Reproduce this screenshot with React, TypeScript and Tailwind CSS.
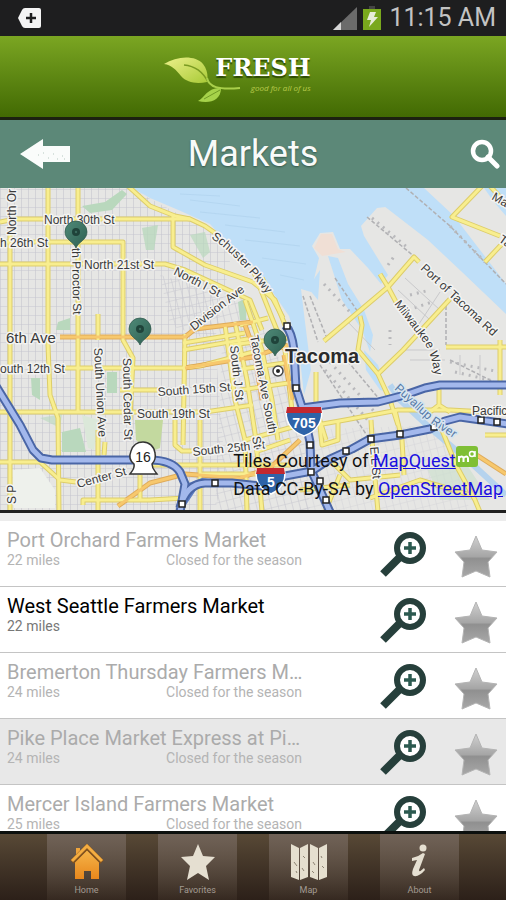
import type { ReactNode } from 'react';

interface Market {
  id: number;
  name: string;
  distance: string;
  closed: boolean;
  pressed?: boolean;
}

const markets: Market[] = [
  { id: 1, name: 'Port Orchard Farmers Market', distance: '22 miles', closed: true },
  { id: 2, name: 'West Seattle Farmers Market', distance: '22 miles', closed: false },
  { id: 3, name: 'Bremerton Thursday Farmers M…', distance: '24 miles', closed: true },
  { id: 4, name: 'Pike Place Market Express at Pi…', distance: '24 miles', closed: true, pressed: true },
  { id: 5, name: 'Mercer Island Farmers Market', distance: '25 miles', closed: true },
];

const yellowRoads = [
  'M0 222 L15 219 H190 L205 226 L215 233',
  'M128 186 L150 206 L175 216 L190 219',
  'M10 232 V512',
  'M48 186 V345 L50 395 L58 418 L59 512',
  'M78 186 V412',
  'M98 314 V340',
  'M98 430 V512',
  'M0 242 H123 V340 L133 358 L130 420',
  'M0 264 H165 L185 270 L250 300 L262 330',
  'M173 216 V247 L205 265 L253 282',
  'M185 334 L183 445',
  'M65 368 H183 L200 366 L253 352',
  'M120 390 H160',
  'M0 412 H205 L253 405',
  'M0 462 H40 L60 480 L76 482',
  'M83 505 V500 H150 L185 498',
  'M105 442 L104 455',
  'M140 475 V500',
  'M175 420 V445 L182 451 H192',
  'M200 420 V512',
  'M150 465 H290 M200 474 H300',
  'M183 350 L253 338 M183 343 L245 333',
  'M225 325 L235 400 L245 440 L247 512',
  'M235 322 L247 380 L256 440 L262 512',
  'M245 300 L262 350 L272 400 L278 440',
  'M253 270 L272 318 L285 350 L292 410',
  'M262 278 L283 318',
  'M253 282 L275 300 L287 330',
  'M240 325 L268 318 M230 345 L288 338 M235 370 L292 362 M240 390 L295 382 M245 440 L300 425 M255 452 L290 440',
  'M316 372 V408 L326 440',
  'M300 428 L345 420 L398 410 H450 L506 413',
  'M320 426 L322 445 L338 440 V422',
  'M371 420 L373 455 L378 512',
  'M395 410 L402 440 L404 475',
  'M324 341 L388 287 L414 257 L419 262',
  'M380 274 L388 287 L396 302',
  'M360 316 L362 325 L358 350 L378 374 L390 400 L398 425',
  'M450 299 L403 350 L378 374',
  'M482 186 L452 217 L500 236',
  'M490 186 L500 197',
  'M485 262 L500 246 L510 238',
  'M446 347 H506 M500 340 V395',
  'M439 385 V405 L430 412 M439 405 L450 412',
  'M440 425 L456 465 L475 500 L480 512',
  'M330 460 L350 480 L400 475 M340 475 L325 512 M300 490 L350 485 M370 498 L420 480 L470 495',
  'M485 435 H506',
];

const orangeRoads = [
  'M60 337 H185 L195 329 L253 322',
  'M118 506 L150 483 L185 474 L240 478 L270 468 L300 440',
  'M185 368 L215 363 L253 357 L288 345',
  'M245 325 L254 350 L262 400',
  'M472 452 L506 474',
  'M284 355 L292 400',
];

const highways = [
  'M-4 386 L20 425 L33 450 L41 458 L52 460 H150 Q172 460 180 472 L185 484 L180 512',
  'M180 508 Q186 484 205 483 H232 L262 486 L285 476 L312 471 L330 459 L352 449 L370 439 L400 435 L430 429 L445 421 L460 417 L508 424',
  'M285 325 Q292 332 294 350 L296 388 L303 410 L310 442 L311 470 L330 512',
  'M302 408 L340 403 L378 402 L405 395 L425 388 L440 385 H510',
];

const junctions: [number, number][] = [
  [287, 326], [296, 388], [310, 445], [311, 472], [320, 481], [326, 500], [346, 451],
  [371, 439], [400, 434], [434, 427], [481, 420], [497, 422], [215, 483], [182, 504],
];

// text, x, y, angle
const streetLabels: [string, number, number, number][] = [
  ['North 30th St', 44, 224, 0],
  ['h 26th St', 0, 247, 0],
  ['North 21st St', 84, 269, 0],
  ['outh 12th St', 0, 373, 0],
  ['South 15th St', 158, 396, -4],
  ['South 19th St', 137, 418, 0],
  ['South 25th St', 193, 456, -6],
  ['Center St', 78, 488, -15],
  ['South Union Ave', 94, 348, 87],
  ['South Cedar St', 123, 358, 89],
  ['th Proctor St', 72, 248, 89],
  ['North Or', 16, 235, -90],
  ['North I St', 173, 274, 27],
  ['Division Ave', 194, 331, -38],
  ['Tacoma Ave South', 250, 336, 79],
  ['South J St', 230, 346, 84],
  ['Port of Tacoma Rd', 420, 269, 43],
  ['Ma', 491, 199, 30],
  ['Ta', 498, 241, 35],
  ['Pacific', 472, 415, 0],
  ['E L St', 370, 447, 85],
  ['S P', 16, 504, -90],
  ['St', 252, 437, 80],
];

const pins: [number, number][] = [
  [76, 233],
  [140, 330],
  [275, 341],
];

function MarketMap() {
  return (
    <svg
      className="block h-[322px] w-full"
      viewBox="0 188 506 322"
      preserveAspectRatio="xMidYMid slice"
      role="img"
      aria-label="Map of Tacoma"
    >
      <defs>
        <pattern id="blocks" width="7" height="9" patternUnits="userSpaceOnUse">
          <path d="M0 0H7M0 0V9" stroke="#c6c6cf" strokeWidth="1.2" fill="none" />
        </pattern>
        <pattern id="hillBlocks" width="7" height="9" patternUnits="userSpaceOnUse" patternTransform="rotate(-14)">
          <path d="M0 0H7M0 0V9" stroke="#c8c8d0" strokeWidth="1.2" fill="none" />
        </pattern>
        <linearGradient id="pin" x1="0" y1="0" x2="1" y2="1">
          <stop offset="0" stopColor="#4f8a78" />
          <stop offset="1" stopColor="#2d5f51" />
        </linearGradient>
        <path id="schuster" d="M211 238 Q240 258 268 296" />
        <path id="milwaukee" d="M394 304 L425 344 Q433 358 436 384" />
        <path id="puyallup" d="M394 389 L432 424 L474 452" />
      </defs>

      <rect x="0" y="188" width="506" height="322" fill="#e6e6e4" />
      <path d="M0 188H130L175 212L213 232L232 250L215 340L225 470L215 510H0Z" fill="url(#blocks)" />
      <path d="M160 275L250 300L300 400L310 510H215L222 345L170 325Z" fill="url(#hillBlocks)" />
      <path d="M300 430L440 425L470 510H300Z" fill="url(#hillBlocks)" opacity="0.55" />

      {/* Parks */}
      <g fill="#b9d8bd">
        <path d="M82 206L105 202L122 190L127 194L112 210L90 213Z" />
        <path d="M142 228L158 225L154 250H146Z" opacity="0.8" />
        <path d="M190 235L205 232L210 252L203 258Z" opacity="0.7" />
        <path d="M58 322L70 318V330H56Z" />
        <path d="M31 378H40V400L32 395Z" />
        <path d="M107 372H117V393H107Z" />
        <path d="M62 432L80 428L86 452H62Z" />
        <path d="M40 418L62 414L60 428Z" opacity="0.6" />
        <path d="M238 302L247 298L246 320H240Z" />
      </g>
      <path d="M135 420H163L160 448L150 452L136 440Z" fill="#c3d99f" />
      <path d="M12 470L40 468L55 490V508H14Z" fill="#eef1ec" />
      <path d="M82 415L98 420L94 450L88 448Z" fill="#dbe8d9" />

      {/* Commencement Bay and the waterways */}
      <g fill="#bfdff8">
        <path d="M132 188H395L386 207L377 208L361 226L364 236L388 275L381 284L368 268L350 249H340L333 232L320 233L312 246L319 258L311 292L301 289L306 330L311 370L304 395L299 350L289 316L256 268L230 246L210 224L176 209L150 198Z" />
        <path d="M390 188L424 188L454 216L506 284V314L462 272L428 240L384 206Z" />
        <path d="M328 256L338 258L348 284L364 310L373 335L370 352L362 330L342 300Z" />
        <path d="M320 270L318 300L308 288Z" />
        <path d="M484 188H506V216L494 202Z" />
        <path d="M364 350L378 365L387 392L380 390L366 370Z" />
      </g>
      <path d="M314 248L321 234H332L338 249L346 252L322 256Z" fill="#f0dfd5" />
      <g stroke="#a9cdea" strokeWidth="1" fill="none" opacity="0.5">
        <path d="M190 200L240 206M200 212L260 218M225 225L285 232M245 240L300 246M262 258L306 264M180 194L220 196M280 275L304 280" />
      </g>

      {/* Rail lines and docks */}
      <g stroke="#b0b0b3" strokeWidth="1.5" strokeDasharray="4 2" fill="none">
        <path d="M406 188L450 226L506 284" />
        <path d="M367 217L416 258" />
        <path d="M303 296L318 342M310 296L326 336M335 278L358 312" />
        <path d="M446 300V345" />
        <path d="M320 365L370 440M340 352L380 400M450 360L500 385" />
      </g>
      <g stroke="#b9b9bc" strokeWidth="3" strokeDasharray="2 5" fill="none">
        <path d="M372 218L408 248M450 226L485 262M324 284L350 312M388 265L395 255M410 295L430 290M408 310L432 302" />
        <path d="M325 370L372 425M330 362L380 418M450 362L500 372M455 372L490 380M390 330V345" />
      </g>
      <g stroke="#c9c9cb" strokeWidth="1" fill="none">
        <path d="M398 290L430 320M405 278L440 310M415 330L440 292M346 320L375 350M400 350H440M410 360H445M460 355V375M480 355V380" />
      </g>
      <path d="M390 385L400 400L430 428L470 462L506 495" stroke="#b5d3ee" strokeWidth="6" fill="none" />
      <path d="M428 470L465 462L490 500H440Z" fill="#cde0cf" opacity="0.7" />

      <g fill="none" strokeLinejoin="round">
        {yellowRoads.map((d) => (
          <path key={d} d={d} stroke="#ddcd6a" strokeWidth="5" />
        ))}
        {orangeRoads.map((d) => (
          <path key={d} d={d} stroke="#dfab5a" strokeWidth="5" />
        ))}
        {yellowRoads.map((d) => (
          <path key={d} d={d} stroke="#f8ee8f" strokeWidth="3" />
        ))}
        {orangeRoads.map((d) => (
          <path key={d} d={d} stroke="#f7c86d" strokeWidth="3" />
        ))}
        <path d="M180 470L186 484L202 478L214 480L196 490L184 508Z" fill="#5d7ec4" />
        {highways.map((d) => (
          <path key={d} d={d} stroke="#4a66a6" strokeWidth="9" />
        ))}
        {highways.map((d) => (
          <path key={d} d={d} stroke="#a3b8ec" strokeWidth="5" />
        ))}
      </g>
      {junctions.map(([x, y]) => (
        <rect key={`${x}-${y}`} x={x - 3} y={y - 3} width="6" height="6" fill="#fff" stroke="#222" strokeWidth="1.5" />
      ))}

      <g
        fontFamily="'Liberation Sans', sans-serif"
        fontSize="12"
        fill="#3a3a3a"
        stroke="#f4f4f2"
        strokeWidth="3"
        strokeLinejoin="round"
        paintOrder="stroke"
      >
        {streetLabels.map(([label, x, y, angle]) => (
          <text key={label + x} transform={`translate(${x} ${y}) rotate(${angle})`}>
            {label}
          </text>
        ))}
        <text><textPath href="#schuster">Schuster Pkwy</textPath></text>
        <text><textPath href="#milwaukee">Milwaukee Way</textPath></text>
        <text fill="#5578a5" stroke="#d7e5f0"><textPath href="#puyallup">Puyallup River</textPath></text>
        <text x="6" y="343" fontSize="15">6th Ave</text>
        <text x="285" y="363" fontSize="20" fontWeight="700" fill="#2c2c2c">Tacoma</text>
      </g>
      <circle cx="278" cy="371" r="5" fill="#fff" stroke="#444" strokeWidth="1.5" />
      <circle cx="278" cy="371" r="2" fill="#222" />

      {/* Route shields */}
      <path d="M143 442C149 442 154 446 155 453C156 458 155 461 152 464C152 469 155 471 157 474H130C132 471 135 469 134 464C130 461 129 456 131 451C133 445 138 442 143 442Z" fill="#fff" stroke="#333" strokeWidth="1.5" />
      <path d="M287 408H321C324 419 318 431 304 436C290 431 284 419 287 408Z" fill="#2e63a8" stroke="#fff" strokeWidth="1.5" />
      <path d="M287 407H321L322 413H286Z" fill="#c3282f" />
      <path d="M257 469H284C287 479 282 489 271 494C259 489 254 479 257 469Z" fill="#2e63a8" stroke="#fff" strokeWidth="1.5" />
      <path d="M257 468H284L285 474H256Z" fill="#c3282f" />
      <g fontFamily="'Liberation Sans', sans-serif" textAnchor="middle">
        <text x="143" y="462" fontSize="14" fill="#222">16</text>
        <text x="304" y="428" fontSize="14" fontWeight="700" fill="#fff">705</text>
        <text x="271" y="487" fontSize="14" fontWeight="700" fill="#fff">5</text>
      </g>

      {pins.map(([x, y]) => (
        <g key={x} transform={`translate(${x} ${y})`}>
          <path d="M0 15C-2 9 -11 7 -11 -1A11 11 0 0 1 11 -1C11 7 2 9 0 15Z" fill="url(#pin)" stroke="#2c5549" strokeWidth="0.7" />
          <circle r="4" cy="-1" fill="#1f433a" />
          <circle r="1.2" cy="-1" fill="#3c6c5f" />
        </g>
      ))}
    </svg>
  );
}

function ZoomIcon() {
  return (
    <svg width="46" height="48" viewBox="0 0 46 48" aria-hidden="true">
      <path d="M3 43L20 26" stroke="#263f3b" strokeWidth="8" />
      <circle cx="30" cy="17" r="13" fill="#fff" stroke="#263f3b" strokeWidth="6" />
      <path d="M30 11V23M24 17H36" stroke="#2c5a50" strokeWidth="3.5" />
    </svg>
  );
}

function StarIcon() {
  return (
    <svg width="44" height="44" viewBox="0 0 44 44" aria-hidden="true">
      <defs>
        <linearGradient id="silver" x1="0" y1="0" x2="0" y2="1">
          <stop offset="0" stopColor="#d0d0d0" />
          <stop offset="0.5" stopColor="#a6a6a6" />
          <stop offset="0.55" stopColor="#909090" />
          <stop offset="1" stopColor="#a8a8a8" />
        </linearGradient>
      </defs>
      <path
        d="M22 2L28 16L43 18L34 28L36 43L22 37L8 43L10 28L1 18L16 16Z"
        fill="url(#silver)"
        stroke="#b4b4b4"
        strokeWidth="1"
        strokeLinejoin="round"
      />
    </svg>
  );
}

function MarketRow({ market }: { market: Market }) {
  return (
    <li
      className={`flex h-[66px] shrink-0 items-start border-b border-[#c4c4c4] pl-[7px] pr-2 ${
        market.pressed ? 'bg-[#e8e8e8]' : 'bg-white'
      }`}
    >
      <div className="w-[295px] pt-[7px]">
        <h2 className={`whitespace-nowrap text-[20px] leading-6 ${market.closed ? 'text-[#ababab]' : 'text-black'}`}>
          {market.name}
        </h2>
        <div className={`flex justify-between text-[14px] leading-4 ${market.closed ? 'text-[#b4b4b4]' : 'text-[#777]'}`}>
          <span>{market.distance}</span>
          {market.closed && <span>Closed for the season</span>}
        </div>
      </div>
      <button type="button" aria-label={`Details for ${market.name}`} className="ml-auto mt-[10px]">
        <ZoomIcon />
      </button>
      <button type="button" aria-label={`Add ${market.name} to favorites`} className="ml-7 mt-[13px]">
        <StarIcon />
      </button>
    </li>
  );
}

function NavItem({ label, children }: { label: string; children: ReactNode }) {
  return (
    <a
      href="#"
      className="flex h-full w-[79px] flex-col items-center bg-gradient-to-b from-[#706257] to-[#43362b]/40 pt-[10px] text-[9px] leading-3 text-[#a39b92]"
    >
      {children}
      <span className="mt-1">{label}</span>
    </a>
  );
}

export default function App() {
  return (
    <div className="flex h-screen flex-col overflow-hidden bg-white font-['Roboto',sans-serif]">
      <div className="flex h-9 shrink-0 items-center bg-[#1e1e1f] pl-[17px] pr-[10px] text-[#c3c3c3]">
        <svg width="25" height="22" viewBox="0 0 25 22" aria-hidden="true">
          <path d="M8 1H22Q24 1 24 3V19Q24 21 22 21H8Q6 21 5 19L1 11L5 3Q6 1 8 1Z" fill="#f4f4f4" />
          <path d="M14 6V16M9 11H19" stroke="#1e1e1f" strokeWidth="2.5" />
        </svg>
        <svg className="ml-auto" width="26" height="24" viewBox="0 0 26 24" aria-hidden="true">
          <path d="M25 1V24H1Z" fill="#6b6b6b" />
          <path d="M9 16V24H1Z" fill="#d6d6d6" />
        </svg>
        <svg className="ml-1" width="20" height="26" viewBox="0 0 20 26" aria-hidden="true">
          <path d="M7 1H13V4H7Z" fill="#444" />
          <path d="M1 4H19V25H1Z" fill="#79a81d" />
          <path d="M8 7H14L12 12H16L7 22L9 15H5Z" fill="#e6ecd8" />
        </svg>
        <span className="ml-[7px] text-[25px] leading-9">11:15 AM</span>
      </div>

      <header className="flex h-[84px] shrink-0 items-start justify-center border-b-[3px] border-[#1c2110] bg-gradient-to-b from-[#7ba622] to-[#426a03] pr-8">
        <svg className="mt-5" width="80" height="48" viewBox="0 0 80 48" aria-hidden="true">
          <defs>
            <linearGradient id="leaf" x1="0" y1="0" x2="1" y2="1">
              <stop offset="0" stopColor="#ecf08a" />
              <stop offset="1" stopColor="#a9cb38" />
            </linearGradient>
          </defs>
          <path d="M1 8C14 0 32 -1 40 8C45 14 45 22 44 26C34 28 24 27 18 20C13 14 9 9 1 8Z" fill="url(#leaf)" />
          <path d="M21 9C32 10 40 16 45 26" fill="none" stroke="#7a9a22" strokeWidth="1.5" />
          <path d="M44 22C46 31 55 34 77 32" fill="none" stroke="#a9cf4b" strokeWidth="2" />
          <path d="M58 32C45 31 42 41 35 45C46 48 58 45 58 32Z" fill="#a6d24a" />
          <path d="M41 43L57 34" stroke="#6f9a24" strokeWidth="1" />
        </svg>
        <div className="-ml-7 mt-[18px] flex flex-col">
          <strong className="font-['DejaVu_Serif',serif] text-[24px] leading-7 text-white [text-shadow:0_2px_1px_#2d4a05]">
            FRESH
          </strong>
          <em className="self-end font-['Open_Sans',sans-serif] text-[8px] leading-3 text-[#b9cc4c]">good for all of us</em>
        </div>
      </header>

      <div className="grid h-[68px] shrink-0 grid-cols-[1fr_auto_1fr] items-center bg-[#5c8878] px-[6px]">
        <button type="button" aria-label="Back" className="ml-[13px] justify-self-start">
          <svg width="52" height="32" viewBox="0 0 52 32">
            <path d="M1 16L24 1V8H51V24H24V31Z" fill="#fafcfb" />
            <path d="M19 17h1M29 20h1M34 16h1M38 21h1M43 18h1M45 21h1M24 15h1" stroke="#b5c8c0" />
          </svg>
        </button>
        <h1 className="text-[36px] leading-10 text-[#f8faf9] [text-shadow:0_1px_2px_#34564a]">Markets</h1>
        <button type="button" aria-label="Search" className="justify-self-end">
          <svg width="30" height="30" viewBox="0 0 30 30">
            <circle cx="12" cy="12" r="9" fill="none" stroke="#fff" strokeWidth="4.5" />
            <path d="M18 18L27 27" stroke="#fff" strokeWidth="5" strokeLinecap="round" />
          </svg>
        </button>
      </div>

      <section className="relative shrink-0 border-b-[3px] border-[#202020]">
        <MarketMap />
        <div className="absolute bottom-2 right-[3px] text-[18px] leading-[26px] text-[#111]">
          <p className="flex items-center">
            Tiles Courtesy of&nbsp;
            <a href="#mapquest" className="text-[#1a10e0] underline">MapQuest</a>
            <svg className="mb-2" width="23" height="22" viewBox="0 0 23 22" aria-hidden="true">
              <rect width="22" height="21" rx="3" fill="#7fbf35" />
              <path d="M3 16V10M3 12Q6 9 7.500 12V16M7.500 12Q11 9 12 12V16" fill="none" stroke="#fff" strokeWidth="2" />
              <circle cx="16" cy="8" r="2.500" fill="none" stroke="#fff" strokeWidth="1.500" />
              <path d="M19 5V11" stroke="#fff" strokeWidth="1.500" />
            </svg>
          </p>
          <p>
            Data CC-By-SA by{' '}
            <a href="#osm" className="text-[#1a10e0] underline">OpenStreetMap</a>
          </p>
        </div>
      </section>

      <ul className="flex min-h-0 flex-1 flex-col overflow-hidden border-t-8 border-[#ececec] bg-white">
        {markets.map((market) => (
          <MarketRow key={market.id} market={market} />
        ))}
      </ul>

      <nav className="flex h-[69px] shrink-0 justify-center gap-8 border-t-[3px] border-[#0c100e] bg-gradient-to-b from-[#584936] to-[#2c2019]">
        <NavItem label="Home">
          <svg width="34" height="36" viewBox="0 0 34 36" aria-hidden="true">
            <defs>
              <linearGradient id="house" x1="0" y1="0" x2="0" y2="1">
                <stop offset="0" stopColor="#f5b54a" />
                <stop offset="1" stopColor="#e8871c" />
              </linearGradient>
            </defs>
            <path d="M6 4H10V10L6 14Z" fill="#efa53c" />
            <path d="M17 6L29 18V35H21V27H14V35H5V18Z" fill="url(#house)" />
            <path d="M2 18L17 3L32 18" fill="none" stroke="#84531e" strokeWidth="5" />
            <path d="M2 17L17 2L32 17" fill="none" stroke="#f4ad42" strokeWidth="3" />
          </svg>
        </NavItem>
        <NavItem label="Favorites">
          <svg width="34" height="36" viewBox="0 0 34 36" aria-hidden="true">
            <path d="M17 0L22 12L34 13L25 22L28 36L17 29L6 36L9 22L0 13L12 12Z" fill="#e5dfd1" />
          </svg>
        </NavItem>
        <NavItem label="Map">
          <svg width="38" height="36" viewBox="0 0 38 36" aria-hidden="true">
            <path d="M1 0L9 4V36L1 33ZM10 4L18 0V33L10 36ZM20 0L28 4V36L20 33ZM29 4L37 0V33L29 36Z" fill="#e5dfcf" />
            <path d="M4 18l3 4M6 27l1 2M13 12l2 2M12 24l2 3M23 18l2 3M22 27l2 2M32 22l2 2M31 12l1 2" stroke="#8d8373" />
          </svg>
        </NavItem>
        <NavItem label="About">
          <svg width="22" height="36" viewBox="0 0 22 36" aria-hidden="true">
            <circle cx="14" cy="4" r="3.500" fill="#e5dfd1" />
            <path d="M3 14Q9 13 14 9L16 10L10 26Q10 29 15 24L16 26Q10 33 5 32Q2 31 4 25L8 16L3 17Z" fill="#e5dfd1" />
          </svg>
        </NavItem>
      </nav>
    </div>
  );
}
